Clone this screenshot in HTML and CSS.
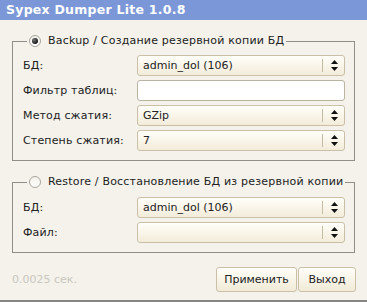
FILE: index.html
```html
<!DOCTYPE html>
<html lang="ru">
<head>
    <meta charset="UTF-8">
    <title>Sypex Dumper Lite 1.0.8</title>
    <link rel="stylesheet" href="styles.css">
</head>
<body>
    <div class="window">
        <div class="titlebar">Sypex Dumper Lite 1.0.8</div>
        <div class="content">
            <fieldset>
                <legend><span class="radio checked"></span>Backup / Создание резервной копии БД</legend>
                <div class="rows">
                    <label>БД:</label>
                    <div class="select"><span>admin_dol (106)</span><i class="sep"></i><svg class="arrows" width="7" height="11" viewBox="0 0 7 11"><path d="M3.5 0 L7 4 L0 4 Z M0 7 L7 7 L3.5 11 Z" fill="#111"/></svg></div>
                    <label>Фильтр таблиц:</label>
                    <div class="input"></div>
                    <label>Метод сжатия:</label>
                    <div class="select"><span>GZip</span><i class="sep"></i><svg class="arrows" width="7" height="11" viewBox="0 0 7 11"><path d="M3.5 0 L7 4 L0 4 Z M0 7 L7 7 L3.5 11 Z" fill="#111"/></svg></div>
                    <label>Степень сжатия:</label>
                    <div class="select"><span>7</span><i class="sep"></i><svg class="arrows" width="7" height="11" viewBox="0 0 7 11"><path d="M3.5 0 L7 4 L0 4 Z M0 7 L7 7 L3.5 11 Z" fill="#111"/></svg></div>
                </div>
            </fieldset>
            <fieldset class="second">
                <legend><span class="radio"></span>Restore / Восстановление БД из резервной копии</legend>
                <div class="rows">
                    <label>БД:</label>
                    <div class="select"><span>admin_dol (106)</span><i class="sep"></i><svg class="arrows" width="7" height="11" viewBox="0 0 7 11"><path d="M3.5 0 L7 4 L0 4 Z M0 7 L7 7 L3.5 11 Z" fill="#111"/></svg></div>
                    <label>Файл:</label>
                    <div class="select"><span></span><i class="sep"></i><svg class="arrows" width="7" height="11" viewBox="0 0 7 11"><path d="M3.5 0 L7 4 L0 4 Z M0 7 L7 7 L3.5 11 Z" fill="#111"/></svg></div>
                </div>
            </fieldset>
            <div class="footer">
                <span class="timer">0.0025 сек.</span>
                <div class="buttons">
                    <button class="apply">Применить</button>
                    <button class="exit">Выход</button>
                </div>
            </div>
        </div>
    </div>
</body>
</html>
```

FILE: styles.css
```css
body {
    margin: 0;
    font-family: "DejaVu Sans", Verdana, sans-serif;
    font-size: 11px;
    color: #222;
    background-color: #f4f2eb;
}

.window {
    height: 300px;
    border-bottom: 2px solid #858583;
    display: flex;
    flex-direction: column;
}

.titlebar {
    height: 20px;
    line-height: 20px;
    background-color: #7c97d8;
    color: #fff;
    font-weight: bold;
    font-size: 12.5px;
    letter-spacing: 0.25px;
    padding-left: 6px;
    white-space: nowrap;
}

.content {
    flex: 1;
    padding: 13px 12px 0 12px;
    display: flex;
    flex-direction: column;
}

fieldset {
    margin: 0;
    border: 1px solid #8f8e88;
    padding: 6px 8px 9px 10px;
}

fieldset.second {
    margin-top: 13px;
    padding-top: 7px;
}

legend {
    margin-left: 4px;
    padding: 0 2px;
    line-height: 16px;
    height: 16px;
    letter-spacing: 0.2px;
    white-space: nowrap;
    display: flex;
    align-items: center;
}

.radio {
    display: inline-block;
    width: 10px;
    height: 10px;
    border: 1px solid #a8a59c;
    border-radius: 50%;
    background: linear-gradient(#f2f0ea, #fff);
    margin-right: 7px;
    position: relative;
}

.radio.checked::after {
    content: "";
    position: absolute;
    left: 2px;
    top: 2px;
    width: 6px;
    height: 6px;
    border-radius: 50%;
    background: radial-gradient(circle at 35% 35%, #777 0, #222 60%, #000 100%);
}

.rows {
    display: grid;
    grid-template-columns: 114px 1fr;
    row-gap: 4px;
    align-items: center;
}

.rows label {
    letter-spacing: 0.15px;
}

.select, .input {
    height: 19px;
    border: 1px solid #c9c0a7;
    border-radius: 3px;
    margin-right: 1px;
}

.select {
    display: flex;
    align-items: center;
    background: linear-gradient(#fffef9, #f3ecda);
}

.select span {
    flex: 1;
    padding-left: 5px;
}

.select .sep {
    width: 1px;
    height: 13px;
    background: #c4bba5;
}

.select .arrows {
    margin: 0 6px 0 8px;
}

.input {
    background: #fff;
    border-color: #bab4a3;
}

.footer {
    margin-top: 13px;
    display: flex;
    justify-content: space-between;
    align-items: center;
    height: 26px;
}

.timer {
    color: #c9c7bf;
}

.buttons {
    display: flex;
    gap: 1px;
    margin-right: -1px;
}

button {
    font-family: "DejaVu Sans", Verdana, sans-serif;
    font-size: 11px;
    color: #222;
    height: 25px;
    border: 1px solid #c9c0a7;
    border-radius: 3px;
    background: linear-gradient(#fffef9, #f1ead6);
    padding: 0;
}

button.apply {
    width: 81px;
}

button.exit {
    width: 58px;
}
```
